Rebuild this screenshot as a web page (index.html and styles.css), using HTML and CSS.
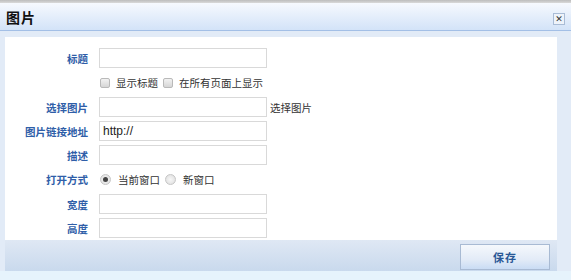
FILE: index.html
```html
<!DOCTYPE html>
<html lang="zh-CN">
<head>
    <meta charset="UTF-8">
    <title>图片</title>
    <link rel="stylesheet" href="styles.css">
</head>
<body>
    <div class="topline"></div>
    <div class="titlebar">
        <span class="title">图片</span>
        <span class="close">&#x2715;</span>
    </div>
    <div class="dialog-body">
        <div class="panel">
            <div class="row">
                <label class="lbl">标题</label>
                <input class="txt" type="text">
            </div>
            <div class="row opts">
                <span class="lbl"></span>
                <span class="box"></span><span class="opt">显示标题</span>
                <span class="box"></span><span class="opt">在所有页面上显示</span>
            </div>
            <div class="row">
                <label class="lbl">选择图片</label>
                <input class="txt" type="text">
                <span class="pick">选择图片</span>
            </div>
            <div class="row">
                <label class="lbl">图片链接地址</label>
                <input class="txt" type="text" value="http://">
            </div>
            <div class="row">
                <label class="lbl">描述</label>
                <input class="txt" type="text">
            </div>
            <div class="row opts">
                <label class="lbl">打开方式</label>
                <span class="radio on"></span><span class="opt">当前窗口</span>
                <span class="radio"></span><span class="opt">新窗口</span>
            </div>
            <div class="row">
                <label class="lbl">宽度</label>
                <input class="txt" type="text">
            </div>
            <div class="row">
                <label class="lbl">高度</label>
                <input class="txt" type="text">
            </div>
        </div>
        <div class="footer">
            <button class="save">保存</button>
        </div>
    </div>
    <div class="bottom"></div>
</body>
</html>
```

FILE: styles.css
```css
body, html {
    margin: 0;
    padding: 0;
    height: 100%;
    font-family: "Noto Sans CJK SC", "Liberation Sans", sans-serif;
    font-size: 10.5px;
    background-color: #e6f3fc;
    overflow: hidden;
}
.topline {
    height: 3px;
    background: linear-gradient(#bdbdbd, #d9d9d9);
}
.titlebar {
    height: 27px;
    display: flex;
    align-items: center;
    justify-content: space-between;
    padding: 0 6px 0 6px;
    background: linear-gradient(#f6f9fe, #d3e3f8);
    border-bottom: 1px solid #a3bfe6;
}
.title {
    font-size: 14px;
    font-weight: bold;
    color: #111;
    letter-spacing: 1px;
}
.close {
    width: 10px;
    height: 10px;
    margin-top: 4px;
    border: 1px solid #a9bcd6;
    background: #eef3fa;
    color: #333;
    font-family: "DejaVu Sans", sans-serif;
    font-size: 9px;
    font-weight: bold;
    line-height: 10px;
    text-align: center;
}
.dialog-body {
    background-color: #e2ebf7;
    padding: 6px 14px 0 5px;
}
.panel {
    background: #fff;
    padding: 11px 0 2px 0;
    height: 190px;
    overflow: hidden;
}
.row {
    display: flex;
    align-items: center;
    height: 20px;
    margin-bottom: 4px;
}
.row.opts {
    height: 21px;
}
.lbl {
    width: 83px;
    margin-right: 11px;
    text-align: right;
    color: #2f5ea8;
    font-weight: bold;
    flex: none;
}
.txt {
    box-sizing: border-box;
    width: 168px;
    height: 20px;
    margin: 0;
    border: 1px solid #d9d9d9;
    padding: 0 3px;
    font-family: "Liberation Sans", sans-serif;
    font-size: 12px;
    color: #222;
    outline: none;
}
.pick {
    margin-left: 3px;
    color: #333;
}
.opt {
    color: #333;
    margin-right: 4px;
}
.box {
    width: 8px;
    height: 8px;
    border: 1px solid #b9b9b9;
    background: linear-gradient(#f2f2f2, #d6d6d6);
    border-radius: 2px;
    margin: 0 6px 0 1px;
}
.radio {
    width: 9px;
    height: 9px;
    border: 1px solid #c6c6c6;
    border-radius: 50%;
    background: radial-gradient(circle, #f7f7f7, #dcdcdc);
    margin: 0 7px 0 1px;
    position: relative;
}
.radio.on::after {
    content: '';
    position: absolute;
    left: 2px;
    top: 2px;
    width: 5px;
    height: 5px;
    border-radius: 50%;
    background: #444;
}
.footer {
    height: 31px;
    display: flex;
    justify-content: flex-end;
    align-items: flex-start;
    padding-right: 7px;
    background: linear-gradient(#dfe8f4, #c9d9ed);
}
.save {
    margin-top: 4px;
    width: 90px;
    height: 26px;
    border: 1px solid #a8bad3;
    background: linear-gradient(#f5f8fc 0%, #e3ebf7 60%, #c9dcf4 100%);
    color: #2a5896;
    font-family: "Noto Sans CJK SC", sans-serif;
    font-weight: bold;
    font-size: 11px;
    letter-spacing: 1px;
}
.bottom {
    height: 9px;
}
```
